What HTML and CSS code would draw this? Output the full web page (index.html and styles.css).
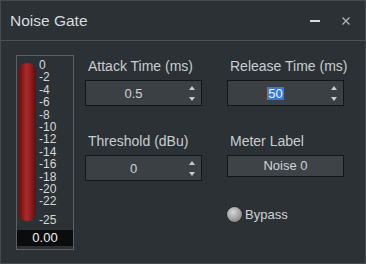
FILE: index.html
```html
<!DOCTYPE html>
<html>
<head>
<meta charset="utf-8">
<link rel="stylesheet" href="styles.css">
</head>
<body>
<div class="window">
  <div class="titlebar">
    <span class="title">Noise Gate</span>
    <div class="controls">
      <span class="min"></span>
      <svg class="close" width="8" height="8" viewBox="0 0 8 8"><path d="M0.5 0.5 L7.5 7.5 M7.5 0.5 L0.5 7.5" stroke="#b9bdc1" stroke-width="1.1" fill="none"/></svg>
    </div>
  </div>
  <div class="content">
    <div class="meter">
      <div class="meter-top">
        <div class="bar"></div>
        <div class="scale">
          <span>0</span><span>-2</span><span>-4</span><span>-6</span><span>-8</span><span>-10</span>
          <span>-12</span><span>-14</span><span>-16</span><span>-18</span><span>-20</span><span>-22</span>
          <span class="last">-25</span>
        </div>
      </div>
      <div class="readout">0.00</div>
    </div>
    <div class="form">
      <div class="col">
        <div class="field">
          <div class="label">Attack Time (ms)</div>
          <div class="spinbox"><div class="value">0.5</div><div class="spin"><svg width="6" height="4" viewBox="0 0 6 4"><path d="M3 0 L6 4 L0 4 Z" fill="#c9cdd0"/></svg><svg width="6" height="4" viewBox="0 0 6 4"><path d="M0 0 L6 0 L3 4 Z" fill="#c9cdd0"/></svg></div></div>
        </div>
        <div class="field second">
          <div class="label">Threshold (dBu)</div>
          <div class="spinbox"><div class="value">0</div><div class="spin"><svg width="6" height="4" viewBox="0 0 6 4"><path d="M3 0 L6 4 L0 4 Z" fill="#c9cdd0"/></svg><svg width="6" height="4" viewBox="0 0 6 4"><path d="M0 0 L6 0 L3 4 Z" fill="#c9cdd0"/></svg></div></div>
        </div>
      </div>
      <div class="col">
        <div class="field">
          <div class="label">Release Time (ms)</div>
          <div class="spinbox"><div class="value"><span class="sel">50</span></div><div class="spin"><svg width="6" height="4" viewBox="0 0 6 4"><path d="M3 0 L6 4 L0 4 Z" fill="#c9cdd0"/></svg><svg width="6" height="4" viewBox="0 0 6 4"><path d="M0 0 L6 0 L3 4 Z" fill="#c9cdd0"/></svg></div></div>
        </div>
        <div class="field second">
          <div class="label">Meter Label</div>
          <div class="textbox">Noise 0</div>
        </div>
        <div class="bypass"><span class="radio"></span><span>Bypass</span></div>
      </div>
    </div>
  </div>
</div>
</body>
</html>
```
FILE: styles.css
```css
html, body {
  margin: 0;
  padding: 0;
  background: #2c3135;
}
.window {
  width: 366px;
  height: 264px;
  box-sizing: border-box;
  border: 1px solid #464b50;
  background: #2c3135;
  font-family: "Liberation Sans", Arial, sans-serif;
  color: #c9cdd1;
  display: flex;
  flex-direction: column;
}
.titlebar {
  height: 39px;
  border-bottom: 1px solid #4b5156;
  display: flex;
  align-items: center;
  padding-left: 9px;
  padding-right: 15px;
}
.title {
  font-size: 15.5px;
  color: #d6dadd;
  flex: 1;
  padding-top: 1px;
}
.controls {
  display: flex;
  align-items: center;
  gap: 22px;
}
.min {
  width: 10px;
  height: 2px;
  background: #d8dcdf;
}
.close {
  display: block;
}
.content {
  display: flex;
  padding-left: 15px;
  padding-top: 14px;
}
.meter {
  width: 58px;
  height: 195px;
  box-sizing: border-box;
  border: 1px solid #5a6065;
  display: flex;
  flex-direction: column;
}
.meter-top {
  height: 174px;
  display: flex;
  padding-left: 2px;
}
.bar {
  width: 17px;
  height: 158px;
  margin-top: 7px;
  border-radius: 8px;
  background: linear-gradient(to right, #630f11 0%, #921c1e 25%, #aa2c2e 45%, #901b1d 70%, #5c0e10 100%);
}
.scale {
  display: flex;
  flex-direction: column;
  padding-top: 3px;
  margin-left: 3px;
  font-size: 12px;
  line-height: 12.4px;
  color: #d4d8db;
}
.scale .last {
  margin-top: 6.6px;
}
.readout {
  height: 16px;
  background: #0b0c0d;
  color: #f2f2f2;
  font-size: 13px;
  line-height: 16px;
  text-align: center;
}
.form {
  display: flex;
  gap: 25px;
  margin-left: 11px;
  padding-top: 3px;
}
.col {
  width: 117px;
  display: flex;
  flex-direction: column;
}
.field.second {
  margin-top: 27px;
}
.label {
  font-size: 14px;
  line-height: 16px;
  height: 16px;
  padding-left: 3px;
  margin-bottom: 6px;
  white-space: nowrap;
}
.spinbox {
  height: 26px;
  box-sizing: border-box;
  border: 1px solid #131618;
  background: #3a4044;
  display: flex;
}
.value {
  flex: 1;
  display: flex;
  align-items: center;
  justify-content: center;
  font-size: 13px;
  color: #d0d4d7;
}
.sel {
  background: #3a78cc;
  color: #e8f0ff;
  border-left: 1px solid #c0622a;
  line-height: 13px;
  padding: 0 1px 0 0;
}
.spin {
  width: 20px;
  display: flex;
  flex-direction: column;
  justify-content: space-between;
  align-items: center;
  padding: 5px 0 4px 1px;
  box-sizing: border-box;
}
.spin svg {
  display: block;
}
.textbox {
  height: 22px;
  box-sizing: border-box;
  border: 1px solid #131618;
  background: #3d4347;
  font-size: 13px;
  line-height: 20px;
  text-align: center;
  color: #d0d4d7;
}
.bypass {
  margin-top: 29px;
  display: flex;
  align-items: center;
  gap: 3px;
  font-size: 13px;
  height: 16px;
  color: #d0d4d7;
}
.radio {
  width: 15px;
  height: 15px;
  border-radius: 50%;
  background: radial-gradient(circle at 40% 35%, #d8d8d8 0%, #a8a8a8 45%, #6e6e6e 100%);
  box-shadow: 0 0 0 0.5px #1a1a1a;
}
```
